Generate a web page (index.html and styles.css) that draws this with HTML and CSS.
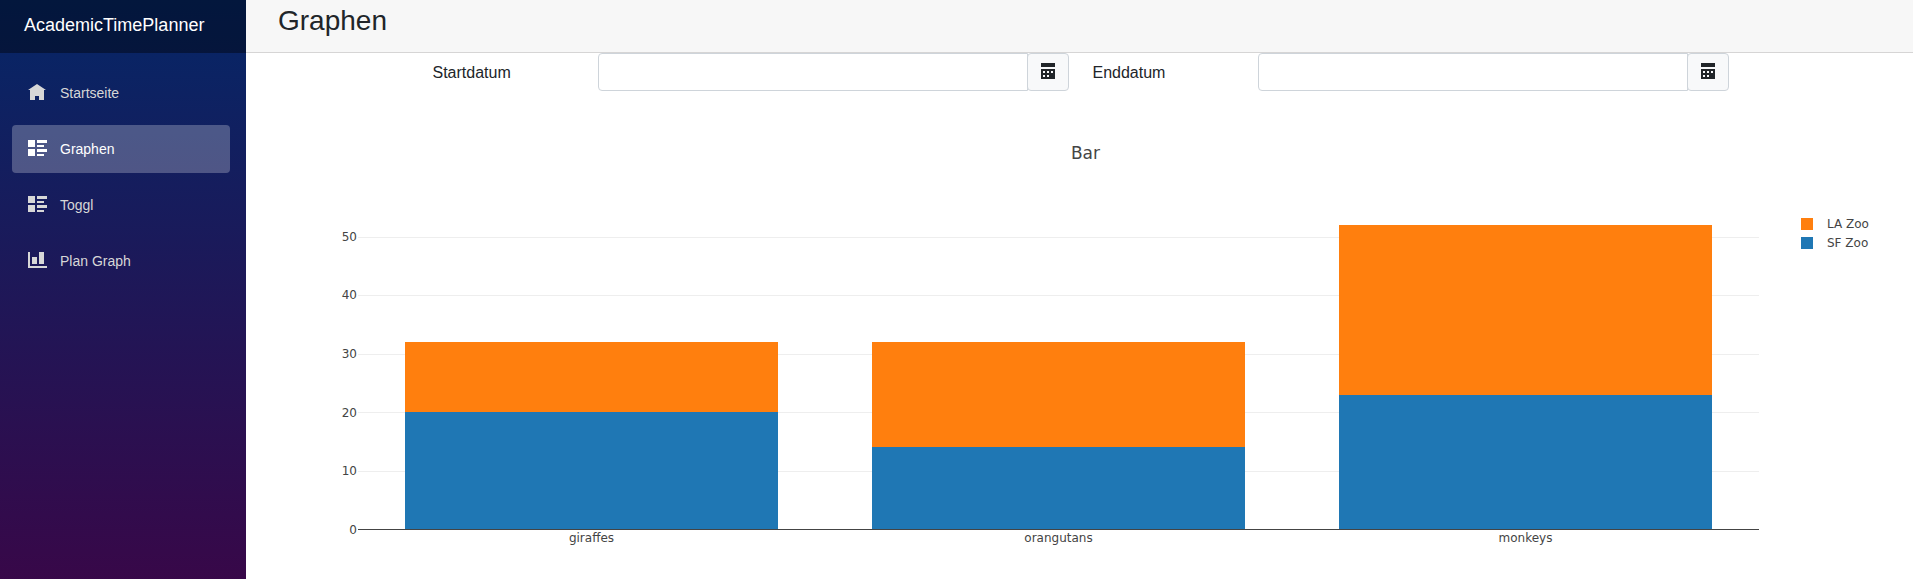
FILE: index.html
```html
<!DOCTYPE html>
<html lang="de">
<head>
<meta charset="utf-8">
<title>AcademicTimePlanner</title>
<link rel="stylesheet" href="styles.css">
</head>
<body>
<div class="page">
  <aside class="sidebar">
    <div class="brand"><a href="#">AcademicTimePlanner</a></div>
    <nav class="nav">
      <a class="nav-link" href="#"><svg class="nav-icon" viewBox="0 0 19 16" aria-hidden="true"><path d="M9 0L0 6h2v10h5v-4h4v4h5V6h2z"/></svg>Startseite</a>
      <a class="nav-link active" href="#"><svg class="nav-icon" viewBox="0 0 19 16" aria-hidden="true"><path d="M0 0h7v7H0zM9 0h10v3H9zM9 5h7v2H9zM0 9h7v7H0zM9 9h10v3H9zM9 14h7v2H9z"/></svg>Graphen</a>
      <a class="nav-link" href="#"><svg class="nav-icon" viewBox="0 0 19 16" aria-hidden="true"><path d="M0 0h7v7H0zM9 0h10v3H9zM9 5h7v2H9zM0 9h7v7H0zM9 9h10v3H9zM9 14h7v2H9z"/></svg>Toggl</a>
      <a class="nav-link" href="#"><svg class="nav-icon" viewBox="0 0 19 16" aria-hidden="true"><path d="M0 0h2v14h17v2H0zM4 5h5v7H4zM11 0h5v12h-5z"/></svg>Plan Graph</a>
    </nav>
  </aside>
  <main class="main">
    <header class="top-row"><h1>Graphen</h1></header>
    <form class="filters">
      <div class="fields">
        <div class="field">
          <label for="start">Startdatum</label>
          <div class="input-group">
            <input id="start" type="text">
            <button type="button" aria-label="Startdatum wählen"><svg class="calendar" viewBox="0 0 7 8" aria-hidden="true"><path d="M0 0v2h7v-2h-7zm0 3v5h7v-5h-7zm1 1h1v1h-1v-1zm2 0h1v1h-1v-1zm2 0h1v1h-1v-1zm-4 2h1v1h-1v-1zm2 0h1v1h-1v-1z" fill-rule="evenodd"/></svg></button>
          </div>
        </div>
        <div class="field">
          <label for="end">Enddatum</label>
          <div class="input-group">
            <input id="end" type="text">
            <button type="button" aria-label="Enddatum wählen"><svg class="calendar" viewBox="0 0 7 8" aria-hidden="true"><path d="M0 0v2h7v-2h-7zm0 3v5h7v-5h-7zm1 1h1v1h-1v-1zm2 0h1v1h-1v-1zm2 0h1v1h-1v-1zm-4 2h1v1h-1v-1zm2 0h1v1h-1v-1z" fill-rule="evenodd"/></svg></button>
          </div>
        </div>
      </div>
    </form>
    <figure class="chart">
      <figcaption>Bar</figcaption>
      <div class="y-axis"><span>50</span><span>40</span><span>30</span><span>20</span><span>10</span><span>0</span></div>
      <div class="plot">
        <div class="gridlines"><i></i><i></i><i></i><i></i><i></i><i></i></div>
        <div class="bars">
          <div class="bar"><div class="la" style="height:21.92%"></div><div class="sf" style="height:36.54%"></div></div>
          <div class="bar"><div class="la" style="height:32.88%"></div><div class="sf" style="height:25.58%"></div></div>
          <div class="bar"><div class="la" style="height:52.98%"></div><div class="sf" style="height:42.02%"></div></div>
        </div>
      </div>
      <ul class="legend">
        <li><span class="swatch la"></span>LA Zoo</li>
        <li><span class="swatch sf"></span>SF Zoo</li>
      </ul>
      <div class="x-axis"><span>giraffes</span><span>orangutans</span><span>monkeys</span></div>
    </figure>
  </main>
</div>
</body>
</html>
```
FILE: styles.css
```css
* { box-sizing: border-box; }

body {
  margin: 0;
  font: 16px/24px "Liberation Sans", Arial, sans-serif;
  color: #212529;
  background: #fff;
}

.page { display: flex; min-height: 100vh; }

/* Sidebar */
.sidebar {
  flex: 0 0 246px;
  background: linear-gradient(180deg, rgb(5, 39, 103) 0%, #3a0647 105%);
}
.brand {
  display: flex;
  align-items: center;
  height: 53px;
  padding: 0 24px 4px;
  background: rgba(0, 0, 0, .4);
}
.brand a { color: #fff; font-size: 18px; text-decoration: none; }
.nav {
  display: flex;
  flex-direction: column;
  gap: 8px;
  padding: 16px 16px 16px 12px;
}
.nav-link {
  display: flex;
  align-items: center;
  height: 48px;
  padding: 0 16px;
  border-radius: 4px;
  color: #d7d7d7;
  font-size: 14px;
  text-decoration: none;
}
.nav-link.active { background: rgba(255, 255, 255, .25); color: #fff; }
.nav-icon { width: 19px; height: 16px; margin: 0 13px 2px 0; fill: currentColor; }

/* Main column */
.main { flex: 1; min-width: 0; }
.top-row {
  height: 53px;
  padding: 4px 32px 0;
  background: #f7f7f7;
  border-bottom: 1px solid #d6d5d5;
}
h1 { margin: 0; font-size: 28px; line-height: 34px; font-weight: 400; }

.filters { padding: 0 30px 0 32px; }
.fields {
  display: grid;
  grid-template-columns: 1fr 1fr;
  max-width: 1320px;
  margin: 0 auto;
}
.field {
  display: grid;
  grid-template-columns: 1fr 3fr;
}
.field label { padding: 8px 12px 0; }
.input-group { display: flex; padding: 0 12px; }
.input-group input {
  flex: 1;
  min-width: 0;
  height: 38px;
  padding: 6px 12px;
  border: 1px solid #ced4da;
  border-radius: 4px 0 0 4px;
  font: inherit;
}
.input-group button {
  display: flex;
  align-items: center;
  justify-content: center;
  width: 42px;
  margin-left: -1px;
  padding: 0 0 2px;
  border: 1px solid #ced4da;
  border-radius: 4px;
  background: #f8f9fa;
  color: #212529;
}
.calendar { width: 14px; height: 16px; fill: currentColor; }

/* Stacked bar chart */
.chart {
  display: grid;
  grid-template-columns: 80px 1fr 134px;
  grid-template-rows: 118px 321px auto;
  margin: 0;
  padding: 0 20px 32px 32px;
  color: #444;
  font: 12px/16px "DejaVu Sans", Verdana, sans-serif;
}
.chart figcaption {
  grid-column: 1 / -1;
  padding-top: 52px;
  font-size: 17px;
  line-height: 20px;
  text-align: center;
}
.y-axis, .gridlines {
  display: grid;
  grid-template-rows: 4.737fr repeat(5, 10fr);
}
.y-axis { padding-right: 1px; text-align: right; }
.y-axis span { align-self: end; margin-bottom: -8px; }
.plot { display: grid; border-bottom: 1px solid #444; }
.gridlines, .bars { grid-area: 1 / 1; }
.gridlines i + i { border-top: 1px solid #eee; }
.bars { display: flex; justify-content: space-around; }
.bar {
  display: flex;
  flex-direction: column;
  justify-content: flex-end;
  width: 26.667%;
}
.la { background: #ff7f0e; }
.sf { background: #1f77b4; }
.legend { margin: 0; padding: 5px 0 0 42px; list-style: none; }
.legend li { display: flex; align-items: center; gap: 14px; height: 19px; }
.swatch { width: 12px; height: 12px; }
.x-axis {
  grid-column: 2;
  display: grid;
  grid-template-columns: repeat(3, 1fr);
  text-align: center;
}
```
